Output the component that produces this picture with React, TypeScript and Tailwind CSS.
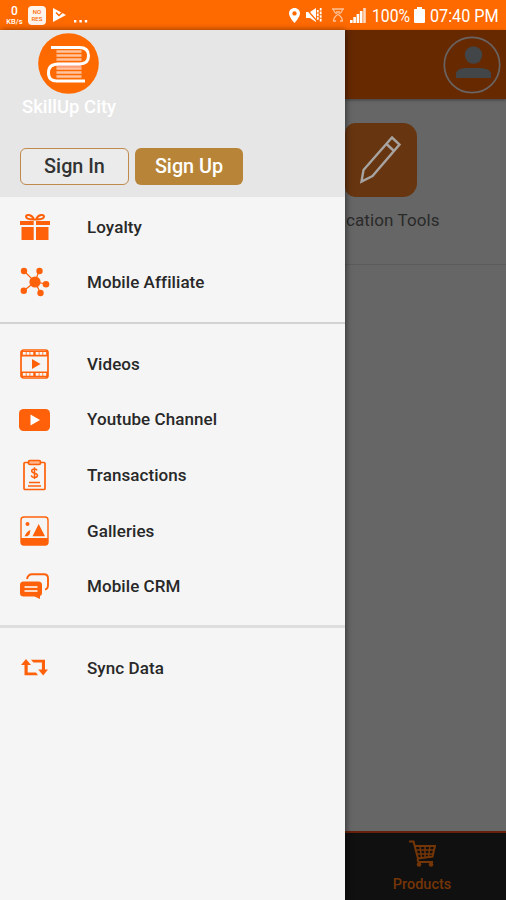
import React from "react";

const ORANGE = "#fe610a";

function GiftIcon() {
  return (
    <svg width="30" height="28" viewBox="0 0 30 28" fill={ORANGE}>
      <path d="M0 8h13.700v4H0zM16 8h14v4H16zM1.500 14h12.200v13H1.500zM16 14h12.500v13H16z" />
      <path d="M14 6.500C10 6.500 6 6 6 3.600 6 1.200 11.500.8 14 6.500zM16 6.500c4 0 8-.5 8-2.900 0-2.400-5.500-2.800-8 2.900z" fill="none" stroke={ORANGE} strokeWidth="2" />
    </svg>
  );
}

function HubIcon() {
  return (
    <svg width="30" height="30" viewBox="0 0 30 30" fill={ORANGE}>
      <path d="M4 4l11 11L19 4M4 23.500L15 15l11 2M15 15l5.500 11" fill="none" stroke={ORANGE} strokeWidth="1.200" />
      <circle cx="15" cy="15" r="5.600" />
      <circle cx="4" cy="4" r="3.200" />
      <circle cx="19.500" cy="4" r="3.200" />
      <circle cx="3.800" cy="23.700" r="3.200" />
      <circle cx="26" cy="17.200" r="3.300" />
      <circle cx="20.500" cy="26" r="3.200" />
    </svg>
  );
}

function FilmIcon() {
  return (
    <svg width="29" height="30" viewBox="0 0 29 30">
      <rect x="1" y="1" width="27" height="28" rx="2.500" fill="none" stroke={ORANGE} strokeWidth="1.700" />
      <path d="M1 2h27v5.500H1zM1 22.500h27V28H1z" fill={ORANGE} />
      <path d="M2.800 4.400h10.500M15.700 4.400h10.500M2.800 25.400h10.500M15.700 25.400h10.500" stroke="#f5f5f5" strokeWidth="2.700" strokeDasharray="3 .75" />
      <path d="M12 10v10l8.500-5z" fill={ORANGE} />
    </svg>
  );
}

function YoutubeIcon() {
  return (
    <svg width="31" height="22" viewBox="0 0 31 22">
      <rect width="31" height="22" rx="4.500" fill={ORANGE} />
      <path d="M11.500 5.500v11l9.500-5.500z" fill="#fff" />
    </svg>
  );
}

function ClipboardIcon() {
  return (
    <svg width="23" height="32" viewBox="0 0 23 32" fill="none" stroke={ORANGE}>
      <rect x="1" y="3.500" width="21" height="27" rx="1" strokeWidth="1.700" />
      <rect x="5.500" y="1.500" width="12" height="4" rx="1.500" strokeWidth="1.700" fill="#ffb38a" />
      <path d="M14.200 11.400Q13.500 10 11.500 10C9.500 10 8.700 11 8.700 12c0 2.800 5.800 1.600 5.800 4.300 0 1.300-1.200 2.200-3 2.200-1.700 0-2.900-.8-3.200-2.200M11.500 8.300V20" strokeWidth="1.500" />
      <path d="M6 23.500h11M5 27h13" strokeWidth="1.500" />
    </svg>
  );
}

function GalleryIcon() {
  return (
    <svg width="29" height="30" viewBox="0 0 29 30" fill={ORANGE}>
      <rect x="1" y="1" width="27" height="28" rx="3" fill="none" stroke={ORANGE} strokeWidth="1.400" />
      <path d="M1 22h27v4q0 3-3 3H4q-3 0-3-3z" />
      <circle cx="7.500" cy="8" r="2" />
      <path d="M12.500 20.300L18.700 8l6.300 12.300zM4.500 20.300Q7 15 10.500 14L9.500 18.500L7.500 20.300z" />
    </svg>
  );
}

function ChatIcon() {
  return (
    <svg width="29" height="27" viewBox="0 0 29 27">
      <path d="M7 6Q8 1.200 12 1.200h12q4 0 4 4V12q0 4-3 4.500" fill="none" stroke={ORANGE} strokeWidth="1.900" />
      <path d="M3.500 8.500h15Q22 8.500 22 12v8q0 2.500-2 3v3l-5.500-2.500h-11Q0 23.500 0 20v-8Q0 8.500 3.500 8.500z" fill={ORANGE} />
      <path d="M4.500 14h13M4.500 18h13" stroke="#fff" strokeWidth="1.500" />
    </svg>
  );
}

function SyncIcon() {
  return (
    <svg width="27" height="17" viewBox="0 0 27 17" fill={ORANGE}>
      <path d="M5 0l5 6H6.700v7.500H15l2 2.800H3.500V6H0zM10 .8h14v9.700h3l-4.800 6-5-6h3.700V3.500h-8.500z" />
    </svg>
  );
}

function Row({ icon, label }: { icon: React.ReactNode; label: string }) {
  return (
    <li className="flex h-[55.6px] items-center">
      <span className="ml-[19px] flex w-[31px] justify-center">{icon}</span>
      <span className="ml-[37px] pt-px text-[17px] font-medium tracking-[0.08px] text-[#282828]">{label}</span>
    </li>
  );
}

function StatusBar() {
  return (
    <div className="flex h-[30px] shrink-0 items-center bg-[#ff6a00] text-white">
      <div className="ml-[5px] flex w-[19px] flex-col items-center leading-none">
        <span className="text-[12px] leading-[12px] font-medium">0</span>
        <span className="text-[7.500px] leading-[9px] font-medium">KB/s</span>
      </div>
      <div className="ml-1 flex h-[19px] w-[18px] flex-col items-center justify-center rounded-[4px] bg-[#fff5ed] text-[6px] leading-[7px] font-medium text-[#ff6a00]">
        <span>NO</span>
        <span>RES</span>
      </div>
      <svg className="ml-[7px]" width="13" height="14" viewBox="0 0 13 14">
        <path d="M0 0l13 7L0 14z" fill="#fff" />
        <path d="M3 4.500l3 3 6.500-6" fill="none" stroke="#ff6a00" strokeWidth="1.500" />
      </svg>
      <svg className="mt-3 ml-2" width="14" height="3" viewBox="0 0 14 3" fill="#fff">
        <path d="M0 0h2.400v2.400H0zM5.400 0h2.400v2.400H5.400zM10.800 0h2.400v2.400h-2.400z" />
      </svg>
      <div className="mr-[7px] ml-auto flex items-center">
        <svg width="11" height="15" viewBox="0 0 11 15">
          <path d="M5.500 0C2.400 0 0 2.400 0 5.400 0 9 5.500 15 5.500 15S11 9 11 5.400C11 2.400 8.600 0 5.500 0zm0 3.200a2.200 2.200 0 010 4.400 2.200 2.200 0 010-4.400z" fill="#fff" />
        </svg>
        <svg className="ml-[6px]" width="16" height="16" viewBox="0 0 16 16">
          <path d="M0 5h4l6-4v14l-6-4H0z" fill="#fff" />
          <path d="M0 1.500L11 14" stroke="#ff6a00" strokeWidth="1.200" />
          <path d="M11.800 3v10M14.700 1v14" stroke="#fff" strokeWidth="1.800" strokeDasharray="2.600 1" />
        </svg>
        <svg className="ml-[10px]" width="12" height="14" viewBox="0 0 12 14" fill="none" stroke="#ffc197" strokeWidth="1.300">
          <path d="M0 1h12M1.500 1Q2 5 6 6.500Q10 5 10.500 1M6 6.500Q2 8.500 1.500 13M6 6.500Q10 8.500 10.500 13M1 13h3M8 13h3M4 4h4" />
        </svg>
        <svg className="ml-[6px]" width="16" height="15" viewBox="0 0 16 15">
          <path d="M0 12h2.600v3H0zM3.300 9h2.600v6H3.300zM6.600 6h2.600v9H6.600z" fill="#fff" />
          <path d="M9.900 3h2.600v12H9.900z" fill="#fff" />
          <path d="M13.200 0h2.600v15h-2.600z" fill="#ffd9bf" />
        </svg>
        <span className="ml-[6px] w-[38px] pt-[2px] text-[17.500px] leading-6 whitespace-nowrap">
          <span className="inline-block origin-left scale-x-[0.9]">100%</span>
        </span>
        <svg className="ml-[4px]" width="11" height="16" viewBox="0 0 11 16" fill="#fff">
          <path d="M3 0h5v2h2q1 0 1 1v12q0 1-1 1H1q-1 0-1-1V3q0-1 1-1h2z" />
        </svg>
        <span className="ml-[5px] w-[69px] pt-[2px] text-[17.500px] leading-6 whitespace-nowrap">
          <span className="inline-block origin-left scale-x-[0.925]">07:40 PM</span>
        </span>
      </div>
    </div>
  );
}

function Logo() {
  return (
    <svg className="block" width="61" height="61" viewBox="0 0 61 61">
      <circle cx="30.500" cy="30.500" r="30.300" fill="#ff6a00" />
      <path d="M18.500 18.500h25M18.500 22.500h25M18.500 26.500h25M18.500 35.500h25M18.500 39.500h25M18.500 43.500h25" stroke="#ffc3a0" strokeWidth="2.600" />
      <path d="M18.500 31h25M18.500 33h25" stroke="#ff9c7c" strokeWidth="2.500" />
      <path d="M13 14.500h28.500q9 0 9 8.200t-9 8.200H20.500q-10 0-10 8.800T19.500 48H47" fill="none" stroke="#fff" strokeWidth="3" />
    </svg>
  );
}

function Drawer() {
  return (
    <aside className="z-10 flex w-[345px] shrink-0 flex-col bg-[#f5f5f5] shadow-[1px_0_6px_rgba(0,0,0,0.5)]">
      <header className="h-[167px] bg-[#e6e6e6] pt-[3px]">
        <div className="ml-[38px]">
          <Logo />
        </div>
        <p className="mt-px ml-[22px] text-[18.500px] leading-6 font-medium text-white">SkillUp City</p>
        <div className="mt-[29px] ml-5 flex gap-[6px]">
          <button className="h-[37px] w-[109px] rounded-[6px] border border-[#c08a4c] bg-[#ebebeb] pt-px text-[19.800px] font-medium text-[#333]">
            Sign In
          </button>
          <button className="h-[37px] w-[108px] rounded-[6px] bg-[#b88437] pt-px text-[19.800px] font-medium text-white">
            Sign Up
          </button>
        </div>
      </header>
      <ul className="mt-[2px] mb-[12px]">
        <Row icon={<GiftIcon />} label="Loyalty" />
        <Row icon={<HubIcon />} label="Mobile Affiliate" />
      </ul>
      <hr className="border-0 h-[2px] bg-[#d2d2d2]" />
      <ul className="mt-3 mb-[11px]">
        <Row icon={<FilmIcon />} label="Videos" />
        <Row icon={<YoutubeIcon />} label="Youtube Channel" />
        <Row icon={<ClipboardIcon />} label="Transactions" />
        <Row icon={<GalleryIcon />} label="Galleries" />
        <Row icon={<ChatIcon />} label="Mobile CRM" />
      </ul>
      <hr className="border-0 h-[3px] bg-[#dedede]" />
      <ul className="mt-3">
        <Row icon={<SyncIcon />} label="Sync Data" />
      </ul>
    </aside>
  );
}

function Page() {
  return (
    <main className="flex flex-1 flex-col bg-[#666]">
      <div className="flex h-[69px] items-center justify-end bg-[#662900] pr-[5px] shadow-[0_1px_3px_rgba(0,0,0,0.4)]">
        <svg width="58" height="58" viewBox="0 0 58 58">
          <circle cx="29" cy="29" r="27.700" fill="none" stroke="#696361" strokeWidth="1.700" />
          <circle cx="30.500" cy="19" r="8.700" fill="#424648" />
          <path d="M13 42v-3.500Q13 32 23 32h14q11 0 11 6.500V42z" fill="#424648" />
        </svg>
      </div>
      <div className="h-[166px] border-b border-[#5b5b5b] pt-6">
        <div className="flex h-[74px] w-[72px] items-center rounded-r-[14px] rounded-l-[10px] bg-[#673510]">
          <svg className="ml-[14px]" width="44" height="50" viewBox="0 0 44 50" fill="none" stroke="#a6a3a0" strokeWidth="2.400">
            <path d="M33 2.500l7.500 7-27 31.500L2.500 46.500l2-11.500zM27.500 9l7.500 7" />
          </svg>
        </div>
        <p className="mt-[11px] ml-px text-[17px] leading-6 tracking-[0.1px] text-[#2a2a2a]">cation Tools</p>
      </div>
      <nav className="mt-auto flex h-[69px] flex-col items-center border-t-2 border-[#67200c] bg-[#101010] pr-[7px] text-[#743507]">
        <svg className="mt-[7px]" width="27" height="27" viewBox="0 0 27 27" fill="none" stroke="#743507">
          <path d="M0 1.500h4.500L9 18.500Q8 22 10.500 22H24M5.500 6H26l-2.500 10.500L9 18.500" strokeWidth="2" />
          <path d="M7 10h17.500M8 14h16M11 6l1.500 12M16 6v11.500M21 6l-1.500 11" strokeWidth="1.500" />
          <circle cx="10" cy="24.500" r="2.300" fill="#743507" stroke="none" />
          <circle cx="22" cy="24.500" r="2.300" fill="#743507" stroke="none" />
        </svg>
        <span className="mt-[8px] text-[14.500px] leading-5 font-medium">Products</span>
      </nav>
    </main>
  );
}

export default function App() {
  return (
    <div className="flex h-[900px] w-[506px] flex-col overflow-hidden font-['Roboto',sans-serif]">
      <StatusBar />
      <div className="flex flex-1">
        <Drawer />
        <Page />
      </div>
    </div>
  );
}
